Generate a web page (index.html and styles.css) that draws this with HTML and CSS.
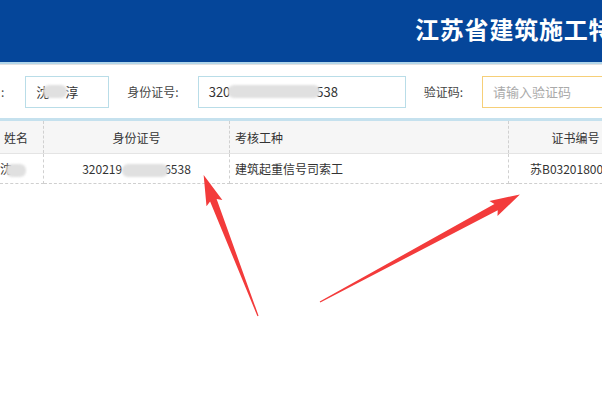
FILE: index.html
```html
<!DOCTYPE html>
<html>
  <head>
    <title>证书查询</title>
    <link rel="stylesheet" href="styles.css">
  </head>
  <body>
    <div class="page">
      <div class="top">
        <h1 class="title">江苏省建筑施工特种作业人员</h1>
      </div>
      <form class="search" action="">
        <span class="label first">:</span>
        <div class="input name"><span>沈</span><i class="blur b1"></i><span>淳</span></div>
        <span class="label">身份证号:</span>
        <div class="input idno"><span>320</span><i class="blur b2"></i><span>538</span></div>
        <span class="label">验证码:</span>
        <div class="input code"><span class="ph">请输入验证码</span></div>
      </form>
      <table class="result">
        <thead>
          <tr>
            <th class="c1 shift">姓名</th>
            <th class="c2">身份证号</th>
            <th class="c3">考核工种</th>
            <th class="c4">证书编号</th>
          </tr>
        </thead>
        <tbody>
          <tr>
            <td class="c1 left">沈<i class="blur b3"></i></td>
            <td class="c2">320219<i class="blur b4"></i>6538</td>
            <td class="c3">建筑起重信号司索工</td>
            <td class="c4 left pad">苏B03201800000123</td>
          </tr>
        </tbody>
      </table>
      <svg class="arrows" width="602" height="399" viewBox="0 0 602 399">
        <g fill="#f33b3b">
          <polygon transform="translate(258,316) rotate(-111.1)" points="0,-0.6 124,-3.5 121,-8.5 151,0 121,8.5 124,3.5 0,0.6"/>
          <polygon transform="translate(320,302) rotate(-28.3)" points="0,-0.6 200,-3.5 197,-8.5 227,0 197,8.5 200,3.5 0,0.6"/>
        </g>
      </svg>
    </div>
  </body>
</html>
```

FILE: styles.css
```css
body { margin: 0; background: #fff; font-family: "Noto Sans CJK SC", "Noto Sans", sans-serif; color: #333; }

.page { position: relative; width: 602px; height: 399px; overflow: hidden; }

.top { height: 62px; background: #05469a; border-bottom: 2px solid #b2d6ea; box-shadow: 0 1px 0 #e2e2e2; display: flex; align-items: center; }
.title { margin: 0; padding-left: 415px; white-space: nowrap; color: #fff; font-size: 24px; font-weight: bold; letter-spacing: 0.8px; line-height: 1; margin-top: -4px; }

.search { display: flex; align-items: center; height: 53px; padding-top: 1px; border-bottom: 3px solid #c5e1ee; white-space: nowrap; }
.label { font-size: 12px; color: #444; margin-left: 18px; margin-right: 19px; }
.label.first { margin-left: 1px; margin-right: 21px; }
.input { box-sizing: border-box; height: 32px; border: 1px solid #b9dde8; display: flex; align-items: center; padding-left: 10px; font-size: 13px; color: #333; flex-shrink: 0; }
.input.name { width: 84px; }
.input.idno { width: 208px; }
.input.code { width: 140px; border-color: #f6cf78; }
.ph { color: #aaa; }

.blur { display: inline-block; height: 13px; background: #e0e0e0; border-radius: 6px; filter: blur(1px); vertical-align: middle; }
.b1 { width: 24px; margin: 0 -2px 0 -6px; }
.b2 { width: 92px; margin: 0 -4px 0 -2px; }
.b3 { width: 20px; margin-left: -6px; }
.b4 { width: 46px; margin: 0 -4px 0 0; }

.result { border-collapse: collapse; table-layout: fixed; width: 640px; font-size: 12px; color: #333; }
.result th { height: 32px; background: #f6f6f6; font-weight: normal; border-bottom: 1px solid #e4e4e4; border-right: 1px dashed #d0d0d0; text-align: center; padding: 0; }
.result td { height: 29px; border-bottom: 1px dashed #cfcfcf; border-right: 1px dashed #d0d0d0; text-align: center; padding: 0; white-space: nowrap; overflow: hidden; }
.result .c1 { width: 43px; }
.result th.shift { text-align: left; padding-left: 4px; width: 39px; }
.result .c2 { width: 185px; }
.result .c3 { width: 273px; text-align: left; padding-left: 5px; }
.result .c4 { width: 133px; }
.result td.left { text-align: left; }
.result td.pad { padding-left: 21px; }

.arrows { position: absolute; left: 0; top: 0; }
```
